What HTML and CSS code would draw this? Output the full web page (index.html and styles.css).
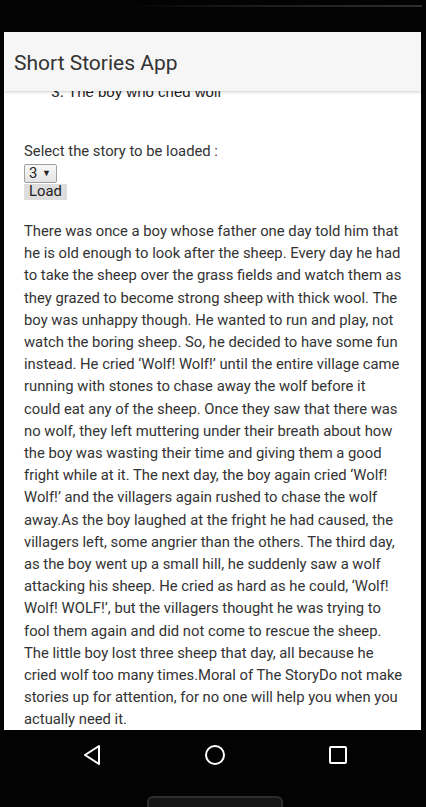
FILE: index.html
```html
<!DOCTYPE html>
<html>
<head>
<meta charset="utf-8">
<link rel="stylesheet" href="styles.css">
</head>
<body>
<div class="phone">
  <div class="status"><div class="bezel-line"></div></div>
  <div class="screen">
    <div class="appbar">Short Stories App</div>
    <div class="content">
      <ol class="stories" start="3">
        <li>The boy who cried wolf</li>
      </ol>
      <div class="label">Select the story to be loaded :</div>
      <div class="select">3 <span class="arrow">▼</span></div>
      <div class="load">Load</div>
      <p class="story">There was once a boy whose father one day told him that<br>
he is old enough to look after the sheep. Every day he had<br>
to take the sheep over the grass fields and watch them as<br>
they grazed to become strong sheep with thick wool. The<br>
boy was unhappy though. He wanted to run and play, not<br>
watch the boring sheep. So, he decided to have some fun<br>
instead. He cried ‘Wolf! Wolf!’ until the entire village came<br>
running with stones to chase away the wolf before it<br>
could eat any of the sheep. Once they saw that there was<br>
no wolf, they left muttering under their breath about how<br>
the boy was wasting their time and giving them a good<br>
fright while at it. The next day, the boy again cried ‘Wolf!<br>
Wolf!’ and the villagers again rushed to chase the wolf<br>
away.As the boy laughed at the fright he had caused, the<br>
villagers left, some angrier than the others. The third day,<br>
as the boy went up a small hill, he suddenly saw a wolf<br>
attacking his sheep. He cried as hard as he could, ‘Wolf!<br>
Wolf! WOLF!’, but the villagers thought he was trying to<br>
fool them again and did not come to rescue the sheep.<br>
The little boy lost three sheep that day, all because he<br>
cried wolf too many times.Moral of The StoryDo not make<br>
stories up for attention, for no one will help you when you<br>
actually need it.</p>
    </div>
  </div>
  <div class="nav">
    <div class="nav-icons">
      <svg class="ic" width="20" height="22" viewBox="0 0 20 22"><path d="M17 2 L3 11 L17 20 Z" fill="none" stroke="#fff" stroke-width="2" stroke-linejoin="round"/></svg>
      <svg class="ic" width="22" height="22" viewBox="0 0 22 22"><circle cx="11" cy="11" r="9" fill="none" stroke="#fff" stroke-width="2"/></svg>
      <svg class="ic" width="20" height="20" viewBox="0 0 20 20"><rect x="2" y="2" width="16" height="16" rx="1" fill="none" stroke="#fff" stroke-width="2"/></svg>
    </div>
    <div class="home-bar"></div>
  </div>
</div>
</body>
</html>
```
FILE: styles.css
```css
html, body {
  margin: 0;
  padding: 0;
  background: #000;
}
.phone {
  width: 426px;
  height: 807px;
  display: flex;
  flex-direction: column;
  background: #030303;
  overflow: hidden;
}
.status {
  height: 32px;
  flex: none;
  padding-top: 5px;
  box-sizing: border-box;
}
.bezel-line {
  margin-left: 125px;
  width: 297px;
  height: 2px;
  background: linear-gradient(to right, rgba(40,40,40,0) 0%, #1a1a1a 40%, #2e2e2e 100%);
}
.screen {
  flex: 1;
  margin: 0 5px 0 4px;
  background: #fff;
  position: relative;
  overflow: hidden;
}
.appbar {
  position: absolute;
  left: 0;
  right: 0;
  top: 0;
  height: 59px;
  background: #f6f6f6;
  box-shadow: 0 1px 3px rgba(0,0,0,0.2);
  font-family: Roboto, sans-serif;
  font-size: 21px;
  color: #333;
  display: flex;
  align-items: center;
  padding-left: 10px;
  box-sizing: border-box;
  padding-top: 2px;
  z-index: 2;
}
.content {
  padding: 0 10px 0 20px;
  font-family: Roboto, sans-serif;
  color: #333;
  font-size: 14.8px;
}
.stories {
  margin: 0;
  padding-left: 44px;
  padding-top: 51px;
  font-family: "Liberation Sans", Arial, sans-serif;
  font-size: 15px;
  line-height: 18px;
  color: #222;
}
.label {
  margin-top: 40px;
  line-height: 20px;
}
.select {
  margin-top: 3px;
  height: 17px;
  border: 1px solid #a0a0a0;
  border-radius: 2px;
  background: linear-gradient(#f8f8f8, #e4e4e4);
  font-size: 14.8px;
  line-height: 17px;
  padding-left: 4px;
  box-sizing: content-box;
  width: 27px;
  color: #222;
}
.arrow {
  font-size: 9px;
  vertical-align: 2px;
  margin-left: 1px;
}
.load {
  margin-top: 1px;
  width: 43px;
  height: 16px;
  background: #ddd;
  font-size: 14.8px;
  line-height: 15px;
  text-align: center;
  color: #222;
}
.story {
  margin: 20px 0 0;
  line-height: 22.2px;
  font-size: 14.8px;
}
.nav {
  height: 77px;
  flex: none;
  position: relative;
}
.nav-icons {
  display: flex;
  justify-content: space-between;
  align-items: center;
  padding: 14px 78px 0 82px;
}
.home-bar {
  position: absolute;
  left: 147px;
  top: 66px;
  width: 136px;
  height: 20px;
  border-radius: 6px;
  border: 2px solid #2c2c2c;
  background: #151515;
  box-sizing: border-box;
}
```
